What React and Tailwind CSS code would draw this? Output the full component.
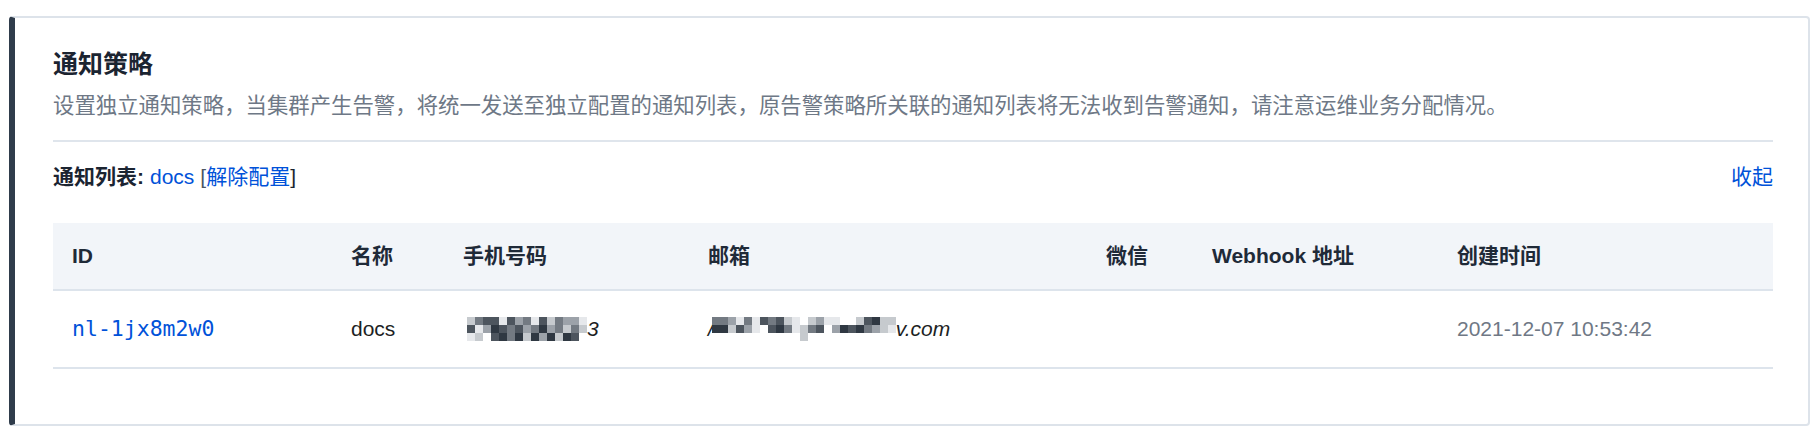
import React from 'react';

const GRAYS = ['#ffffff', '#e6e8eb', '#c6cace', '#9ca2a9', '#737a82', '#4d555e', '#2f3842'];

const phoneMosaic = [
  [2, 4, 5, 5, 1, 5, 3, 4, 1, 5, 2, 4, 3, 3, 1],
  [5, 1, 3, 6, 5, 4, 5, 3, 4, 6, 3, 4, 2, 4, 2],
  [1, 2, 0, 5, 6, 4, 6, 2, 6, 3, 6, 2, 6, 5, 0],
];

const emailMosaic = [
  [4, 4, 3, 1, 4, 1, 5, 4, 5, 2, 1, 0, 2, 3, 1, 1, 0, 0, 2, 5, 6, 2, 2],
  [6, 6, 2, 5, 3, 1, 0, 5, 6, 4, 1, 2, 4, 5, 0, 3, 6, 5, 6, 4, 3, 2, 1],
  [0, 0, 0, 0, 0, 0, 0, 0, 0, 0, 0, 2, 0, 0, 0, 0, 0, 0, 0, 0, 0, 0, 0],
];

// blurred text block, drawn as a grid of grey squares
const Mosaic = ({ rows, cell = 8 }) => (
  <svg width={rows[0].length * cell} height={rows.length * cell} className="block shrink-0">
    {rows.map((row, y) =>
      row.map((v, x) => (
        <rect key={`${x}-${y}`} x={x * cell} y={y * cell} width={cell} height={cell} fill={GRAYS[v]} />
      ))
    )}
  </svg>
);

const columns = [
  { key: 'id', title: 'ID', width: 279 },
  { key: 'name', title: '名称', width: 112 },
  { key: 'phone', title: '手机号码', width: 245 },
  { key: 'email', title: '邮箱', width: 398 },
  { key: 'wechat', title: '微信', width: 106 },
  { key: 'webhook', title: 'Webhook 地址', width: 245 },
  { key: 'created', title: '创建时间' },
];

const font = { fontFamily: '"Liberation Sans", "Noto Sans CJK SC", sans-serif' };

export default function App() {
  return (
    <div className="bg-white pt-[16px] pl-[9px] pr-[10px] pb-[11px]" style={font}>
      <div className="rounded-[4px] border-2 border-l-[6px] border-[#dde3ea] border-l-[#2f3c4b] pt-[29px] pb-[55px] pl-[38px] pr-[35px]">
        <h2 className="text-[25px] leading-[34px] font-semibold text-[#1b2431]">通知策略</h2>
        <p className="mt-[10px] text-[21.4px] leading-[30px] text-[#6e7886]">
          设置独立通知策略，当集群产生告警，将统一发送至独立配置的通知列表，原告警策略所关联的通知列表将无法收到告警通知，请注意运维业务分配情况。
        </p>
        <div className="mt-[19px] h-[2px] bg-[#dfe5ec]" />

        <div className="mt-[20px] flex items-center justify-between text-[21px] leading-[30px]">
          <div className="flex items-center">
            <span className="font-semibold text-[#1b2431]">通知列表:</span>
            <span className="ml-[6px] text-[#0052d9]">docs</span>
            <span className="ml-[6px] text-[#4b5563]">[</span>
            <span className="text-[#0052d9]">解除配置</span>
            <span className="text-[#1b2431]">]</span>
          </div>
          <button className="text-[#0052d9]">收起</button>
        </div>

        <table className="mt-[31px] w-full table-fixed border-collapse text-left text-[21px]">
          <colgroup>
            {columns.map(c => (
              <col key={c.key} style={c.width ? { width: c.width } : undefined} />
            ))}
          </colgroup>
          <thead className="bg-[#f2f5f9]">
            <tr className="h-[67px] border-b-2 border-[#dde4ec]">
              {columns.map(c => (
                <th key={c.key} className="px-[19px] font-semibold text-[#1f2a38]">{c.title}</th>
              ))}
            </tr>
          </thead>
          <tbody>
            <tr className="h-[78px] border-b-2 border-[#dde4ec]">
              <td className="px-[19px] text-[#0052d9] text-[21.5px]" style={{ fontFamily: '"DejaVu Sans Mono", "Liberation Mono", monospace' }}>
                nl-1jx8m2w0
              </td>
              <td className="px-[19px] text-[#1d1f24]">docs</td>
              <td className="px-[19px]">
                <div className="flex items-center pl-[4px]">
                  <Mosaic rows={phoneMosaic} />
                  <span className="italic text-[#1d1f24]">3</span>
                </div>
              </td>
              <td className="px-[19px]">
                <div className="flex items-center">
                  <span className="italic text-[#1d1f24] -mr-[2px]">/</span>
                  <Mosaic rows={emailMosaic} />
                  <span className="italic text-[#1d1f24]">v.com</span>
                </div>
              </td>
              <td className="px-[19px]" />
              <td className="px-[19px]" />
              <td className="px-[19px] text-[#6f7885]">2021-12-07 10:53:42</td>
            </tr>
          </tbody>
        </table>
      </div>
    </div>
  );
}
